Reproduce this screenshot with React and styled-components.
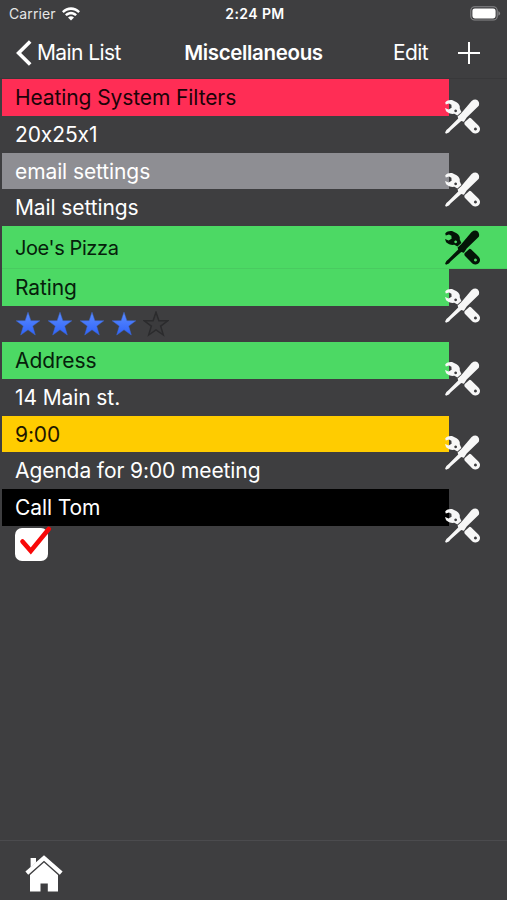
import React from 'react'
import styled, { createGlobalStyle } from 'styled-components'


const items = [
  { title: 'Heating System Filters', value: '20x25x1', bg: '#ff2d55', color: '#1c0308' },
  { title: 'email settings', value: 'Mail settings', bg: '#8e8e93', color: '#fff' },
  { title: "Joe's Pizza", bg: '#4cd964', color: '#06200b', full: true },
  { title: 'Rating', rating: 4, bg: '#4cd964', color: '#06200b' },
  { title: 'Address', value: '14 Main st.', bg: '#4cd964', color: '#06200b' },
  { title: '9:00', value: 'Agenda for 9:00 meeting', bg: '#ffcc00', color: '#1c1600' },
  { title: 'Call Tom', checked: true, bg: '#000', color: '#fff' },
]

function ToolsIcon({ color }) {
  return (
    <svg width="36" height="37" viewBox="0 0 36 37" fill={color}>
      <path
        fillRule="evenodd"
        d="M1.2 4.4C3 2.4 5.4 1.7 8 2.1L12.6 4.2C15 5.6 16.2 7.8 15.8 10.4L17.4 14L13.4 17.4L10.4 15.8C7.4 16.3 4.2 15.2 2.1 13.3L1 10L4.6 11.5L7.6 9.8L7.4 6.8L5 5.5L1.8 6.6ZM11.6 11.4a1.4 1.4 0 1 0 .1 0Z"
      />
      <path
        fillRule="evenodd"
        d="M20.8 24L25.3 19.9Q26.2 19.6 27 20.3L34.4 27.4A4.6 4.6 0 0 1 28.4 34.4L20.8 26.8Q19.9 25.2 20.8 24ZM31.4 29.6a1.5 1.5 0 1 0 .1 0Z"
      />
      <path d="M13.6 18.4L17.2 15.2L27.6 3Q30.4 .9 33.2 1.9Q36 4 34.8 7.8L22.7 19.6L19.9 23.7L17.2 22.9L6.8 32.3L4.9 34.6L2 35.7L1.1 34.6L2.4 31.9L4.7 29.9L14.2 20.5Z" />
    </svg>
  )
}

function Stars({ count }) {
  return (
    <StarRow>
      {[0, 1, 2, 3, 4].map((n) => (
        <svg key={n} width="26" height="26" viewBox="0 0 26 26">
          <defs>
            <linearGradient id="starFill" x1="0" y1="0" x2="0" y2="1">
              <stop offset="0" stopColor="#5b8cff" />
              <stop offset="1" stopColor="#2f63fa" />
            </linearGradient>
          </defs>
          <path
            d="M13 1.2L15.9 9.7L24.8 9.8L17.7 15.1L20.3 24L13 18.8L5.7 24L8.3 15.1L1.2 9.8L10.1 9.7Z"
            fill={n < count ? 'url(#starFill)' : '#3b3b3d'}
            stroke={n < count ? '#3a66d0' : '#2b2b2d'}
            strokeWidth={n < count ? 0.5 : 1.5}
          />
        </svg>
      ))}
    </StarRow>
  )
}

function Item({ item }) {
  if (item.full) {
    return (
      <FullItem $bg={item.bg} $color={item.color}>
        <span>{item.title}</span>
        <ToolsIcon color="#041507" />
      </FullItem>
    )
  }

  return (
    <ItemStyled>
      <div className="content">
        <Title $bg={item.bg} $color={item.color}>{item.title}</Title>
        <Value>
          {item.value}
          {item.rating && <Stars count={item.rating} />}
          {item.checked && (
            <Checkbox>
              <svg width="38" height="38" viewBox="0 0 38 38">
                <path d="M7.5 17.5L15.8 27L33.8 5" fill="none" stroke="#f80808" strokeWidth="4.6" strokeLinecap="round" />
              </svg>
            </Checkbox>
          )}
        </Value>
      </div>
      <ToolsIcon color="#f7f7f7" />
    </ItemStyled>
  )
}

function App() {
  return (
    <Screen>
      <GlobalStyle />
      <StatusBar>
        <div className="carrier">
          Carrier
          <svg width="18" height="14" viewBox="0 0 18 14" fill="#fff">
            <path d="M0 4.2C5-1.2 13-1.2 18 4.2L16.3 6C12.3 1.9 5.7 1.9 1.7 6Z" />
            <path d="M3 7.4C6.4 4 11.6 4 15 7.4L13.3 9.1C10.8 6.8 7.2 6.8 4.7 9.1Z" />
            <path d="M6 10.4Q9 8 12 10.4L9 13.6Z" />
          </svg>
        </div>
        <div className="time">2:24 PM</div>
        <svg className="battery" width="31" height="15" viewBox="0 0 31 15">
          <rect x=".8" y=".8" width="26.4" height="13.2" rx="3.8" fill="none" stroke="#88888a" strokeWidth="1.1" />
          <rect x="2.4" y="2.4" width="23.2" height="10" rx="2.4" fill="#fff" />
          <path d="M28.4 5Q31.8 7.4 28.4 9.8Z" fill="#88888a" />
        </svg>
      </StatusBar>
      <NavBar>
        <div className="back">
          <svg width="17" height="28" viewBox="0 0 17 28">
            <path d="M15.2 2.5L3.6 14L15.2 25.5" fill="none" stroke="#fff" strokeWidth="3.6" />
          </svg>
          Main List
        </div>
        <h1>Miscellaneous</h1>
        <div className="actions">
          <span>Edit</span>
          <svg width="22" height="22" viewBox="0 0 22 22">
            <path d="M11 0V22M0 11H22" stroke="#fff" strokeWidth="2" />
          </svg>
        </div>
      </NavBar>
      <List>
        {items.map((item) => <Item key={item.title} item={item} />)}
      </List>
      <BottomBar>
        <svg width="38" height="38" viewBox="0 0 38 38" fill="#fff">
          <path d="M5.6 3H11V7.5L5.6 12.5Z" />
          <path d="M19 .2L37.6 16.6L34.8 19.8L19 5.8L3.2 19.8L.4 16.6Z" />
          <path d="M5 20L19 7.4L33 20V36.5H22.8V28.5H15.5V36.5H5Z" />
        </svg>
      </BottomBar>
    </Screen>
  )
}

const GlobalStyle = createGlobalStyle`
  *{
    box-sizing: border-box;
  }
  body{
    margin: 0;
    background: #3e3e40;
  }
`;

const Screen = styled.div`
  display: flex;
  flex-direction: column;
  width: 507px;
  height: 900px;
  overflow: hidden;
  background: #3e3e40;
  color: #fff;
  font-family: Inter, "Liberation Sans", sans-serif;
  font-size: 21px;
  letter-spacing: -.1px;
  font-feature-settings: "calt" 0;
  svg{
    display: block;
    flex-shrink: 0;
  }
`;

const StatusBar = styled.div`
  display: grid;
  grid-template-columns: 1fr auto 1fr;
  align-items: center;
  height: 27px;
  padding: 0 6px 0 9px;
  font-size: 14px;
  letter-spacing: .1px;
  .carrier{
    display: flex;
    align-items: center;
    gap: 6px;
    color: #e6e6e6;
  }
  .time{
    font-weight: 600;
    letter-spacing: .4px;
  }
  .battery{
    justify-self: end;
  }
`;

const NavBar = styled.div`
  display: grid;
  grid-template-columns: 1fr auto 1fr;
  align-items: center;
  height: 52px;
  padding: 0 15px;
  border-bottom: 1px solid #38383a;
  letter-spacing: -.6px;
  h1{
    margin: 0;
    font-size: 20.5px;
    font-weight: 600;
    letter-spacing: -.35px;
  }
  .back{
    display: flex;
    align-items: center;
    gap: 5px;
  }
  .actions{
    display: flex;
    align-items: center;
    justify-content: flex-end;
    gap: 30px;
    padding-right: 12px;
  }
`;

const List = styled.div`
  flex: 1;
  padding-top: .4px;
`;

const ItemStyled = styled.div`
  display: flex;
  align-items: center;
  height: 73.35px;
  padding-left: 2px;
  .content{
    width: 447.4px;
    height: 100%;
  }
  > svg{
    margin-left: -5.4px;
  }
`;

const Title = styled.div`
  display: flex;
  align-items: center;
  height: 36.6px;
  padding: .6px 0 0 13px;
  background: ${(props) => props.$bg};
  color: ${(props) => props.$color};
`;

const Value = styled.div`
  display: flex;
  align-items: center;
  height: 36.4px;
  padding-left: 13px;
`;

const FullItem = styled.div`
  display: flex;
  align-items: center;
  justify-content: space-between;
  height: 42.9px;
  margin-left: 2px;
  padding: 0 27px 0 13px;
  border-bottom: 1px solid #49cb60;
  background: ${(props) => props.$bg};
  color: ${(props) => props.$color};
  font-size: 20px;
  letter-spacing: -.4px;
  span{
    padding-top: 2px;
  }
`;

const StarRow = styled.div`
  display: flex;
  gap: 6px;
`;

const Checkbox = styled.div`
  width: 33px;
  height: 33px;
  margin-top: 1px;
  border-radius: 7px;
  background: #fff;
  svg{
    margin-top: -4px;
  }
`;

const BottomBar = styled.div`
  height: 60px;
  padding: 14px 0 0 25px;
  border-top: 1px solid #4b4b4e;
`;

export default App
